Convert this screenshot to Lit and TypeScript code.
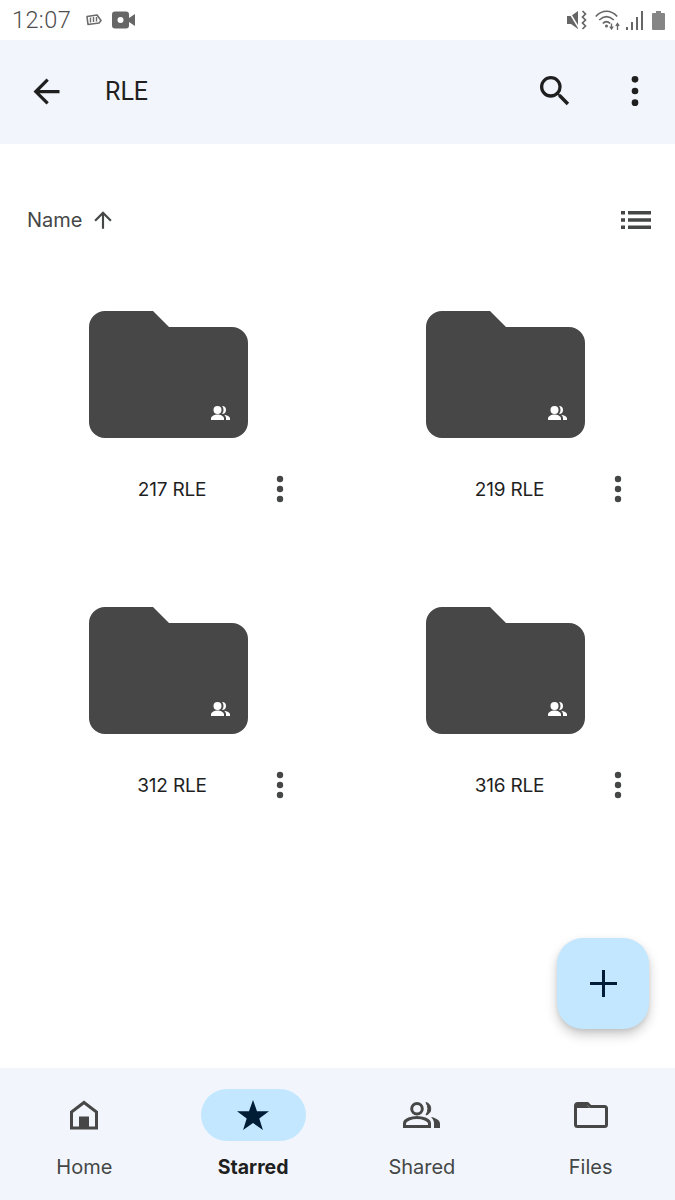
import { LitElement, html, css, svg } from 'lit';
import { customElement } from 'lit/decorators.js';

const folders = ['217 RLE', '219 RLE', '312 RLE', '316 RLE'];

const moreVert = svg`<circle cx="12" cy="5" r="2"/><circle cx="12" cy="12" r="2"/><circle cx="12" cy="19" r="2"/>`;

@customElement('app-root')
export class AppRoot extends LitElement {
  private _statusBar() {
    return html`
      <div class="status">
        <span class="time">12:07</span>
        <svg class="st-pill" width="16" height="12" viewBox="0 0 16 12">
          <path d="M1 2.500 11 1l4 5.500-2 2.500-11 1.500z" fill="none" stroke="#6b6b6b" stroke-width="1.600" stroke-linejoin="round"/>
          <path d="M4.500 3.500v5M7.500 3v5M10.500 3v4.500" stroke="#6b6b6b" stroke-width="1.400"/>
        </svg>
        <svg class="st-cam" width="24" height="18" viewBox="0 0 24 18">
          <rect x="0" y="0.500" width="17" height="17" rx="3" fill="#666"/>
          <circle cx="8.500" cy="9" r="3" fill="#fff"/>
          <path d="M17 7l6-4v12l-6-4z" fill="#666"/>
        </svg>
        <span class="spacer"></span>
        <svg width="21" height="20" viewBox="0 0 21 20">
          <path d="M0 6h4l7-5v18l-7-5H0z" fill="#666"/>
          <path d="M1 0l12 20" stroke="#fff" stroke-width="1.500"/>
          <path d="M15.500 1l3 3-3 3 3 3-3 3 3 3-3 3" fill="none" stroke="#666" stroke-width="1.700"/>
        </svg>
        <svg class="st-wifi" width="25" height="20" viewBox="0 0 25 20">
          <path d="M.8 6.500C7-.5 16-.5 22.200 6.500M4.200 10C9 5.500 14 5.500 18.800 10M7.800 13.500c2.500-2.500 4.900-2.500 7.400 0" fill="none" stroke="#666" stroke-width="1.700"/>
          <circle cx="11.500" cy="16" r="1.500" fill="#666"/>
          <path d="M16.500 13.500v5M14.800 16.500l1.700 2.500 1.700-2.500M22.500 20v-6M20.800 16l1.700-2.500 1.700 2.500" fill="none" stroke="#666" stroke-width="1.300"/>
        </svg>
        <svg class="st-signal" width="17" height="19" viewBox="0 0 17 19">
          <path d="M1 16v3M6 11v8M11 6v13M16 0v19" stroke="#666" stroke-width="2"/>
        </svg>
        <svg class="st-battery" width="13" height="19" viewBox="0 0 13 19">
          <path d="M4 0h5v2H12a1 1 0 0 1 1 1V18a1 1 0 0 1-1 1H1a1 1 0 0 1-1-1V3a1 1 0 0 1 1-1h3z" fill="#858585"/>
        </svg>
      </div>
    `;
  }

  private _appBar() {
    return html`
      <header class="appbar">
        <svg class="back" width="39" height="39" viewBox="0 0 24 24">
          <path d="M20 11H7.830l5.590-5.590L12 4l-8 8 8 8 1.410-1.410L7.830 13H20z"/>
        </svg>
        <h1 class="title">RLE</h1>
        <svg class="search" width="40" height="40" viewBox="0 0 24 24">
          <path d="M15.500 14h-.79l-.28-.27A6.470 6.470 0 0 0 16 9.500 6.500 6.500 0 1 0 9.500 16c1.610 0 3.090-.59 4.230-1.570l.27.28v.79l5 4.990L20.490 19l-4.990-5zm-6 0C7.010 14 5 11.990 5 9.500S7.010 5 9.500 5 14 7.010 14 9.500 11.990 14 9.500 14z"/>
        </svg>
        <svg class="more-top" width="40" height="40" viewBox="0 0 24 24">${moreVert}</svg>
      </header>
    `;
  }

  private _sortRow() {
    return html`
      <div class="sort">
        <span class="sort-name">Name</span>
        <svg class="sort-arrow" width="26" height="26" viewBox="0 0 24 24">
          <path d="M4 12l1.410 1.410L11 7.830V20h2V7.830l5.580 5.590L20 12l-8-8z"/>
        </svg>
        <span class="spacer"></span>
        <svg class="list-icon" width="30" height="18" viewBox="0 0 30 18">
          <path d="M0 0h4v3.500H0zM0 7.250h4v3.500H0zM0 14.500h4V18H0zM7 0h23v3.500H7zM7 7.250h23v3.500H7zM7 14.500h23V18H7z"/>
        </svg>
      </div>
    `;
  }

  private _card(name: string) {
    return html`
      <div class="card">
        <svg class="folder" width="159" height="127" viewBox="0 0 159 127">
          <path d="M16 0H64L80 16H143A16 16 0 0 1 159 32V111A16 16 0 0 1 143 127H16A16 16 0 0 1 0 111V16A16 16 0 0 1 16 0Z" fill="#464746"/>
          <g fill="#fff">
            <circle cx="128.500" cy="99" r="4"/>
            <path d="M122 109v-1.500c0-2.500 4-4 6.500-4s6.500 1.500 6.500 4V109z"/>
            <path d="M133 95a4 4 0 0 1 0 8 6 6 0 0 0 0-8z"/>
            <path d="M135 103.700c2.700.4 6 1.500 6 3.800V109h-4v-1.700c0-1.500-.8-2.700-2-3.600z"/>
          </g>
        </svg>
        <div class="label-row">
          <span class="name">${name}</span>
          <svg class="more" width="24" height="32" viewBox="0 0 24 32">
            <circle cx="12" cy="6" r="3.200"/><circle cx="12" cy="16" r="3.200"/><circle cx="12" cy="26" r="3.200"/>
          </svg>
        </div>
      </div>
    `;
  }

  private _nav() {
    return html`
      <nav class="nav">
        <div class="tab">
          <div class="tab-icon">
            <svg width="28" height="30" viewBox="0 0 28 30">
              <path d="M14 2.500 26.500 12v16h-25V12z" fill="none" stroke="#464746" stroke-width="3"/>
              <rect x="9" y="16.500" width="10" height="11" fill="#464746"/>
            </svg>
          </div>
          <span class="tab-label">Home</span>
        </div>
        <div class="tab active">
          <div class="tab-icon">
            <svg width="34" height="32" viewBox="0 0 34 32">
              <path d="M17 1l4 11.300h12l-9.700 7.200 3.600 11.500L17 24l-9.900 7 3.600-11.500L1 12.300h12z" fill="#001d35"/>
            </svg>
          </div>
          <span class="tab-label">Starred</span>
        </div>
        <div class="tab">
          <div class="tab-icon">
            <svg width="38" height="26" viewBox="0 0 38 26">
              <circle cx="14" cy="6.800" r="5.300" fill="none" stroke="#464746" stroke-width="3"/>
              <path d="M1.500 24.500v-3c0-4 7.500-6 12.500-6s12.500 2 12.500 6v3z" fill="none" stroke="#464746" stroke-width="3"/>
              <path d="M23 .5A6.500 6.500 0 0 1 23 13 12 12 0 0 0 23 .5z" fill="#464746" stroke="#464746" stroke-width="1"/>
              <path d="M28 15c4 .8 9 3 9 6.500V26H31V21c0-2.500-1.500-4.500-3-6z" fill="#464746"/>
            </svg>
          </div>
          <span class="tab-label">Shared</span>
        </div>
        <div class="tab">
          <div class="tab-icon">
            <svg width="34" height="26" viewBox="0 0 34 26">
              <path d="M3.500 1.500h10l3 3H30.500a2 2 0 0 1 2 2V22.500a2 2 0 0 1-2 2H3.500a2 2 0 0 1-2-2V3.500a2 2 0 0 1 2-2z" fill="none" stroke="#464746" stroke-width="3"/>
              <path d="M3 3h10l2.500 3H3z" fill="#464746"/>
            </svg>
          </div>
          <span class="tab-label">Files</span>
        </div>
      </nav>
    `;
  }

  override render() {
    return html`
      ${this._statusBar()}
      ${this._appBar()}
      <main class="content">
        ${this._sortRow()}
        <div class="grid">${folders.map((f) => this._card(f))}</div>
      </main>
      ${this._nav()}
      <button class="fab" aria-label="New">
        <svg width="27" height="27" viewBox="0 0 27 27">
          <path d="M12 0h3v12h12v3H15v12h-3V15H0v-3h12z" fill="#001d35"/>
        </svg>
      </button>
    `;
  }

  static styles = css`
    :host {
      display: flex;
      flex-direction: column;
      position: relative;
      height: 1200px;
      background: #fff;
      font-family: Inter, Roboto, sans-serif;
      color: #1f1f1f;
      overflow: hidden;
    }

    svg {
      display: block;
      flex: none;
    }

    .spacer {
      flex: 1;
    }

    .status {
      height: 40px;
      display: flex;
      align-items: center;
      padding: 0 10px 0 12px;
      box-sizing: border-box;
      background: #fff;
    }

    .time {
      font-family: Roboto, sans-serif;
      font-size: 23.500px;
      font-weight: 300;
      letter-spacing: 0.4px;
      color: #4d4d4d;
      margin-right: 15px;
    }

    .st-cam {
      margin-left: 10px;
    }

    .st-wifi {
      margin-left: 7px;
    }

    .st-signal {
      margin-left: 6px;
    }

    .st-battery {
      margin-left: 9px;
    }

    .appbar {
      height: 104px;
      flex: none;
      display: flex;
      align-items: center;
      background: #f2f6fc;
      padding: 0 20px 2px 27px;
      box-sizing: border-box;
      fill: #1f1f1f;
    }

    .title {
      margin: 0 0 0 39px;
      font-family: Roboto, sans-serif;
      font-size: 25px;
      font-weight: 400;
      flex: 1;
      color: #1f1f1f;
    }

    .more-top {
      margin-left: 40px;
    }

    .content {
      flex: 1;
    }

    .sort {
      height: 152px;
      display: flex;
      align-items: center;
      padding: 0 24px 0 27px;
      box-sizing: border-box;
      color: #444746;
      fill: #444746;
    }

    .sort-name {
      font-size: 20px;
      font-weight: 400;
    }

    .sort-arrow {
      margin-left: 8px;
    }

    .grid {
      display: grid;
      grid-template-columns: 337px 338px;
    }

    .card {
      height: 296px;
      padding-top: 15px;
      box-sizing: border-box;
    }

    .folder {
      margin-left: 89px;
    }

    .label-row {
      height: 48px;
      margin-top: 27px;
      padding: 0 33px 0 88px;
      display: flex;
      align-items: center;
    }

    .name {
      flex: 1;
      text-align: center;
      font-size: 19px;
      letter-spacing: -0.2px;
      color: #1f1f1f;
    }

    .more {
      margin: 0 12px;
      fill: #444746;
    }

    .nav {
      height: 132px;
      flex: none;
      display: grid;
      grid-template-columns: repeat(4, 1fr);
      background: #f2f6fc;
    }

    .tab {
      display: flex;
      flex-direction: column;
      align-items: center;
      padding-top: 21px;
      color: #444746;
    }

    .tab-icon {
      width: 105px;
      height: 52px;
      border-radius: 26px;
      display: flex;
      align-items: center;
      justify-content: center;
    }

    .active .tab-icon {
      background: #c2e7ff;
    }

    .tab-label {
      margin-top: 14px;
      font-size: 20px;
      line-height: 24px;
    }

    .active .tab-label {
      font-size: 19.500px;
      font-weight: 700;
      color: #1f1f1f;
    }

    .fab {
      position: absolute;
      left: 557px;
      top: 938px;
      width: 92px;
      height: 91px;
      border: none;
      border-radius: 26px;
      background: #c2e7ff;
      display: flex;
      align-items: center;
      justify-content: center;
      padding: 0;
      box-shadow: 0 6px 12px rgba(0, 0, 0, 0.2), 0 2px 4px rgba(0, 0, 0, 0.08);
    }
  `;
}
